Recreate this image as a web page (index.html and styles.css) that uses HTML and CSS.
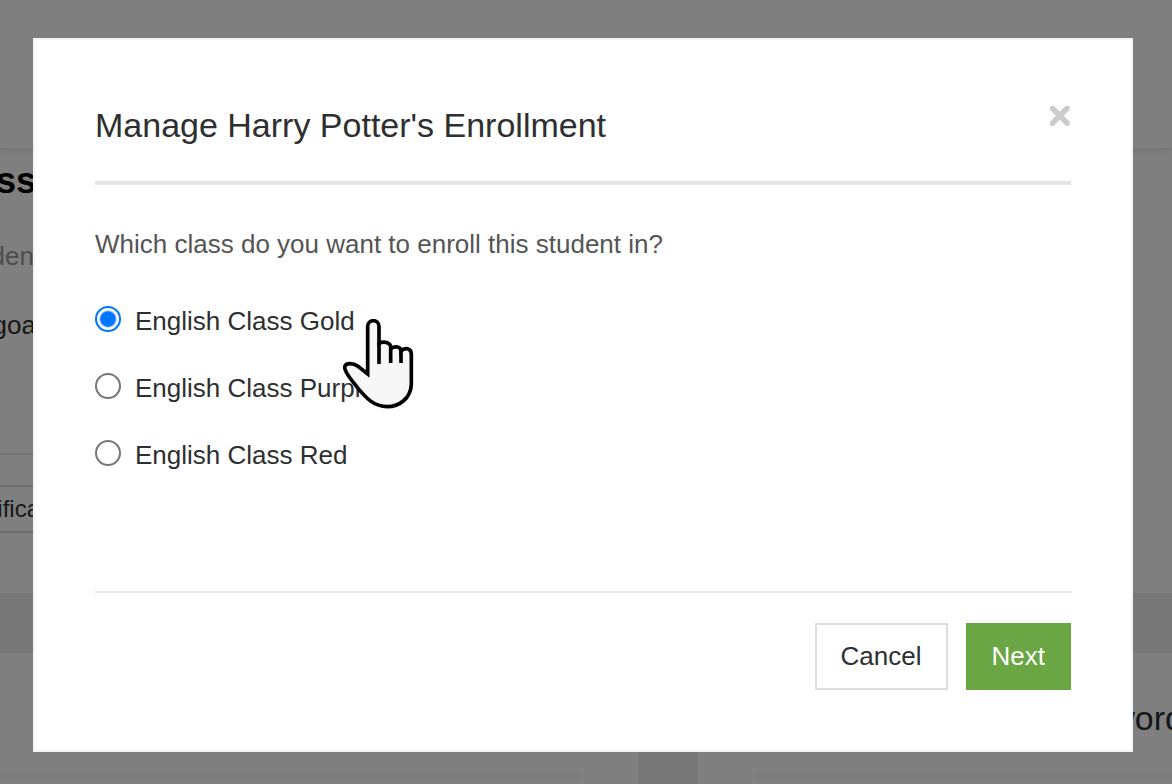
FILE: index.html
```html
<!DOCTYPE html>
<html lang="en">
<head>
  <meta charset="utf-8">
  <title>Manage Enrollment</title>
  <link rel="stylesheet" href="styles.css">
</head>
<body>
  <div class="page" aria-hidden="true">
    <div class="topbar"></div>
    <div class="summary">
      <div class="clip heading">ss</div>
      <div class="clip subtitle">den</div>
      <div class="clip goal">goa</div>
      <div class="toolbar">
        <div class="clip tab">ifica</div>
      </div>
    </div>
    <div class="band"></div>
    <div class="columns">
      <div class="card card-left">
        <div class="card-title"></div>
      </div>
      <div class="card card-right">
        <div class="card-title">word</div>
      </div>
    </div>
  </div>

  <div class="overlay">
    <form class="modal" role="dialog" aria-labelledby="modal-title">
      <div class="modal-header">
        <h2 id="modal-title">Manage Harry Potter's Enrollment</h2>
        <button type="button" class="close" aria-label="Close">
          <svg width="22" height="22" viewBox="0 0 22 22">
            <path d="M2.6 2.6L19 19M19 2.6L2.6 19" stroke="#cccccc" stroke-width="5.6"/>
            <path d="M2.6 2.6L19 19M19 2.6L2.6 19" stroke="#cccccc" stroke-width="3.6" stroke-linecap="round"/>
          </svg>
        </button>
      </div>

      <fieldset class="options">
        <legend>Which class do you want to enroll this student in?</legend>
        <div class="option">
          <input type="radio" id="gold" name="class" value="gold" checked>
          <label for="gold">English Class Gold</label>
        </div>
        <div class="option">
          <input type="radio" id="purple" name="class" value="purple">
          <label for="purple">English Class Purple</label>
        </div>
        <div class="option">
          <input type="radio" id="red" name="class" value="red">
          <label for="red">English Class Red</label>
        </div>
        <svg class="pointer" width="72" height="92" viewBox="36 42 216 276">
          <path d="M113 207V64a17 17 0 0 1 34 0V115C160 108 183 110 183 131C194 122 213 124 213 138C224 126 244 129 244 147V238C242 280 208 305 172 305C130 305 106 276 84 250C66 224 44 206 44 187C46 171 70 174 84 184Z" fill="#f7f7f7" stroke="#000000" stroke-width="11"/>
          <path d="M147 112V177M182 128V174M213 135V174" fill="none" stroke="#000000" stroke-width="11"/>
        </svg>
      </fieldset>

      <div class="modal-footer">
        <button type="button" class="btn btn-cancel">Cancel</button>
        <button type="submit" class="btn btn-next">Next</button>
      </div>
    </form>
  </div>
</body>
</html>
```
FILE: styles.css
```css
* {
  box-sizing: border-box;
}

body {
  margin: 0;
  height: 100vh;
  overflow: hidden;
  background-color: #ffffff;
  color: #2d2f30;
  font-family: "Liberation Sans", Arial, sans-serif;
  font-size: 26px;
}

/* page behind the dialog */
.page {
  height: 100%;
  display: flex;
  flex-direction: column;
}

.topbar {
  flex: none;
  height: 150px;
  border-bottom: 2px solid #ececec;
  box-shadow: 0 2px 6px rgba(0, 0, 0, 0.06);
}

.summary {
  flex: none;
  width: 50%;
  padding-top: 11px;
}

.clip {
  display: flex;
  justify-content: flex-end;
  width: 36px;
  overflow: hidden;
}

.heading {
  color: #000000;
  font-size: 36px;
  font-weight: bold;
  line-height: 40px;
}

.subtitle {
  margin-top: 40px;
  width: 34px;
  color: #999999;
  line-height: 30px;
}

.goal {
  margin-top: 39px;
  line-height: 30px;
}

.toolbar {
  margin-top: 113px;
  padding: 30px 0 60px;
  border-top: 2px solid #e4e4e4;
}

.tab {
  width: 40px;
  border: solid #d8d8d8;
  border-width: 2px 0;
  font-size: 24px;
  line-height: 44px;
}

.band {
  flex: none;
  height: 60px;
  background-color: #eeeeee;
}

.columns {
  flex: 1;
  display: flex;
  gap: 60px;
  background-color: #eeeeee;
}

.card {
  flex: none;
  padding-top: 45px;
  background-color: #ffffff;
}

.card-left {
  width: 638px;
  padding-right: 60px;
}

.card-right {
  flex: 1;
  margin-right: -12px;
  padding-left: 60px;
}

.card-title {
  height: 80px;
  border-bottom: 4px solid #f6f6f6;
  font-size: 34px;
  line-height: 40px;
  text-align: right;
}

/* dialog */
.overlay {
  position: fixed;
  inset: 0;
  padding: 38px 39px 0 33px;
  background-color: rgba(0, 0, 0, 0.5);
}

.modal {
  padding: 60px;
  border: 2px solid #f4f4f4;
  background-color: #ffffff;
}

.modal-header {
  display: flex;
  justify-content: space-between;
  align-items: flex-start;
  padding-bottom: 31px;
  border-bottom: 4px solid #e4e4e4;
}

h2 {
  margin: 0;
  font-size: 34px;
  font-weight: normal;
  line-height: 50px;
}

.close {
  display: flex;
  padding: 5px 0;
  border: none;
  background: none;
  cursor: pointer;
}

.options {
  position: relative;
  margin: 44px 0 0;
  padding: 0;
  border: none;
}

legend {
  margin-bottom: 45px;
  padding: 0;
  color: #555555;
  line-height: 30px;
}

.option {
  display: flex;
  align-items: flex-start;
  gap: 14px;
  margin-bottom: 33px;
  line-height: 34px;
}

.option input {
  appearance: none;
  width: 26px;
  height: 26px;
  margin: 2px 0 0;
  border: 2px solid #767676;
  border-radius: 50%;
}

.option input:checked {
  border-color: #0075ff;
  background: radial-gradient(circle, #0075ff 7px, #ffffff 9px);
}

.pointer {
  position: absolute;
  top: 15px;
  left: 247px;
}

.modal-footer {
  display: flex;
  justify-content: flex-end;
  gap: 18px;
  margin-top: 86px;
  padding-top: 30px;
  border-top: 2px solid #e4e4e4;
}

.btn {
  padding: 0 24px;
  border: 2px solid #dddddd;
  background-color: #ffffff;
  color: #2d2f30;
  font-family: inherit;
  font-size: 26px;
  line-height: 63px;
  cursor: pointer;
}

.btn-next {
  border-color: #6aa744;
  background-color: #6aa744;
  color: #ffffff;
}
```
